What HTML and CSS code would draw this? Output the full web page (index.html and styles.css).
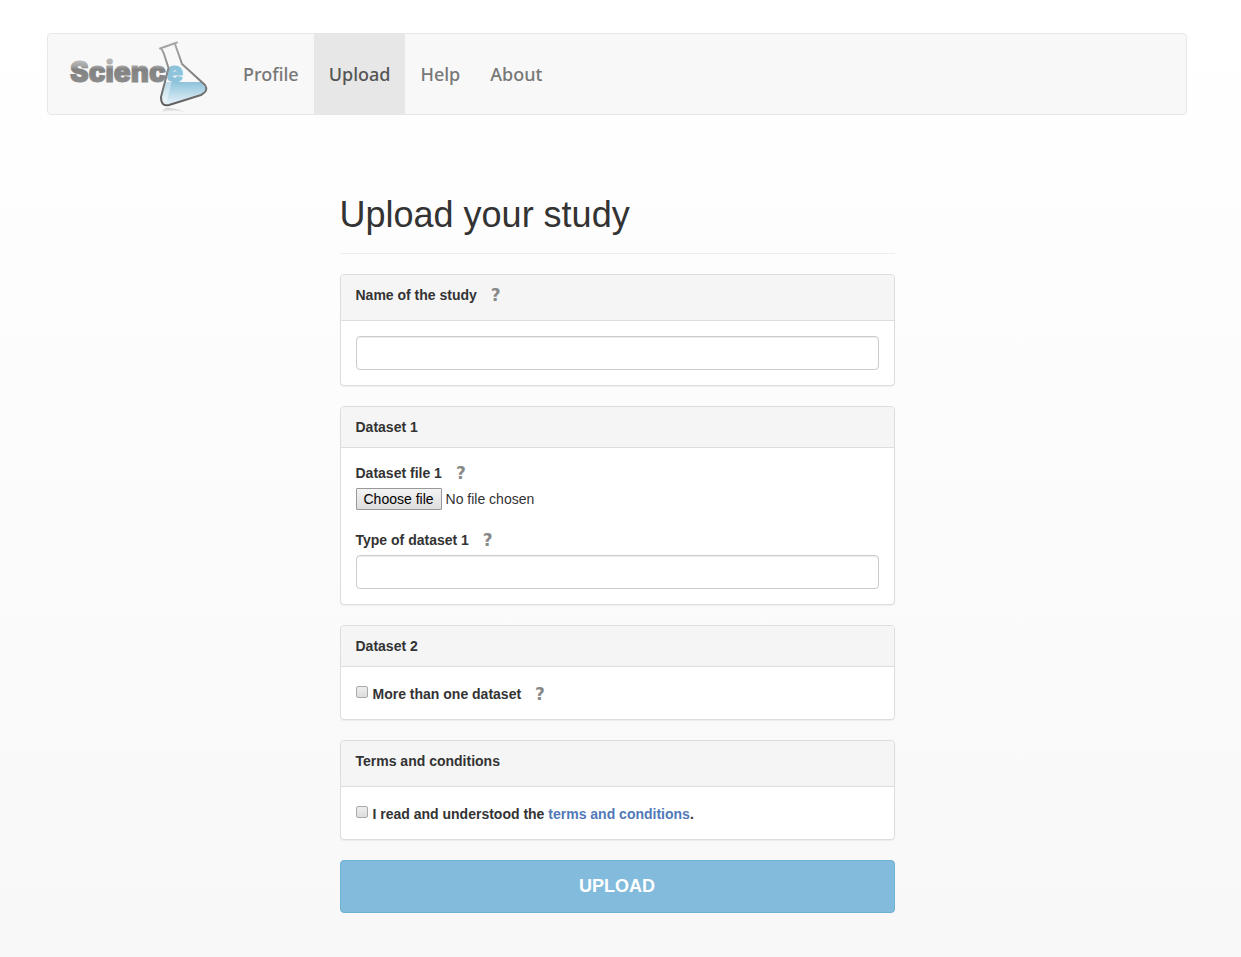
FILE: index.html
```html
<!DOCTYPE html>
<html lang="en">
<head>
<meta charset="utf-8">
<meta name="viewport" content="width=device-width, initial-scale=1">
<title>Upload your study</title>
<link rel="stylesheet" href="styles.css">
</head>
<body>
<div class="container">
  <nav class="navbar">
    <a class="brand" href="#">
      <svg class="logo" viewBox="0 0 150 80" role="img" aria-label="Science">
        <defs>
          <linearGradient id="letters" gradientUnits="userSpaceOnUse" x1="0" y1="28" x2="0" y2="49">
            <stop offset="0" stop-color="#b5b5b5"/>
            <stop offset=".2" stop-color="#a2a2a2"/>
            <stop offset=".35" stop-color="#828282"/>
            <stop offset="1" stop-color="#8b8b8b"/>
          </linearGradient>
          <linearGradient id="glass" x1="0" y1="0" x2="0" y2="1">
            <stop offset="0" stop-color="#a9a9a9"/>
            <stop offset="1" stop-color="#5e5e5e"/>
          </linearGradient>
          <linearGradient id="liquid" x1="0" y1="0" x2="0" y2="1">
            <stop offset="0" stop-color="#8dc3db"/>
            <stop offset="1" stop-color="#e6f2f8"/>
          </linearGradient>
          <linearGradient id="shade" x1="0" y1="0" x2="0" y2="1">
            <stop offset="0" stop-color="#d0d0d0"/>
            <stop offset="1" stop-color="#f8f8f8"/>
          </linearGradient>
        </defs>
        <text class="logo-text" x="7" y="48" fill="url(#letters)" stroke="url(#letters)">Scienc<tspan fill="#8ec3dc" stroke="#8ec3dc">e</tspan></text>
        <path d="M102 48H138L143 54Q142 58 138 60L106 70Q101 71 99 65Z" fill="url(#liquid)"/>
        <path d="M106 34L104 47H109L104 67L100 68L98 62Z" fill="#fff" opacity=".4"/>
        <path d="M97 14.500L114 8.500M98 14.500Q100 17 101 20L105.500 34L98 63Q98 73 106 71L138 61Q146 57 142 51L119 30L112 10" fill="none" stroke="url(#glass)" stroke-width="2" stroke-linejoin="round" stroke-linecap="round"/>
        <path d="M98 79Q101 73 107 74Q117 75 124 79Q114 76 107 77Q102 77 98 79Z" fill="url(#shade)"/>
      </svg>
    </a>
    <ul class="menu">
      <li><a href="#">Profile</a></li>
      <li><a class="active" href="#" aria-current="page">Upload</a></li>
      <li><a href="#">Help</a></li>
      <li><a href="#">About</a></li>
    </ul>
  </nav>
  <main class="content">
    <h1 class="title">Upload your study</h1>
    <form class="form">
      <section class="panel">
        <div class="panel-heading tall"><label for="name">Name of the study</label><button class="help" type="button">?</button></div>
        <div class="panel-body"><input class="field" id="name" type="text"></div>
      </section>
      <section class="panel">
        <div class="panel-heading">Dataset 1</div>
        <div class="panel-body stack">
          <div class="group">
            <div class="caption"><label for="file">Dataset file 1</label><button class="help" type="button">?</button></div>
            <label class="picker"><input class="picker-input" id="file" type="file"><span class="picker-button">Choose file</span><span>No file chosen</span></label>
          </div>
          <div class="group">
            <div class="caption"><label for="type">Type of dataset 1</label><button class="help" type="button">?</button></div>
            <input class="field" id="type" type="text">
          </div>
        </div>
      </section>
      <section class="panel">
        <div class="panel-heading">Dataset 2</div>
        <div class="panel-body check-row"><input class="check" id="more" type="checkbox"><label for="more">More than one dataset</label><button class="help" type="button">?</button></div>
      </section>
      <section class="panel">
        <div class="panel-heading tall">Terms and conditions</div>
        <div class="panel-body check-row"><input class="check" id="terms" type="checkbox"><label for="terms">I read and understood the <a class="link" href="#">terms and conditions</a>.</label></div>
      </section>
      <button class="submit" type="submit">UPLOAD</button>
    </form>
  </main>
</div>
</body>
</html>
```
FILE: styles.css
```css
* { box-sizing: border-box; }

html { min-height: 100%; background: linear-gradient(#fff, #f8f8f8); }

body {
  margin: 0;
  padding: 33px 54px 44px 47px;
  font: 14px/20px "Liberation Sans", Arial, sans-serif;
  color: #333;
}

.container { max-width: 1140px; margin: 0 auto; }

.navbar {
  display: flex;
  background: #f8f8f8;
  border: 1px solid #e7e7e7;
  border-radius: 4px;
}

.brand { display: block; padding: 0 15px; }
.logo { display: block; width: 150px; height: 80px; }
.logo-text { font: 900 28px Inter, sans-serif; stroke-width: 1px; }

.menu { display: flex; flex-wrap: wrap; margin: 0; padding: 0; list-style: none; }
.menu a {
  display: block;
  padding: 0 15px;
  font: 500 18px/80px "Noto Sans", sans-serif;
  color: #777;
  text-decoration: none;
}
.menu .active { background: #e7e7e7; color: #555; }

.content { max-width: 555px; margin: 80px auto 0; }

.title {
  margin: 0 0 20px;
  padding-bottom: 18px;
  border-bottom: 1px solid #eee;
  font-size: 36px;
  line-height: 40px;
  font-weight: 400;
}

.form { display: flex; flex-direction: column; gap: 20px; }

.panel {
  background: #fff;
  border: 1px solid #ddd;
  border-radius: 4px;
  box-shadow: 0 1px 1px rgba(0, 0, 0, .05);
}

.panel-heading {
  display: flex;
  padding: 10px 15px;
  background: #f5f5f5;
  border-bottom: 1px solid #ddd;
  border-radius: 3px 3px 0 0;
  font-weight: 700;
}
.tall { padding-bottom: 15px; }

.panel-body { padding: 15px; }
.stack { display: flex; flex-direction: column; gap: 20px; }

.caption { display: flex; margin-bottom: 5px; font-weight: 700; }

.help {
  height: 20px;
  margin: 0 0 0 14px;
  padding: 0;
  border: 0;
  background: none;
  font: 700 17px/20px "DejaVu Sans", sans-serif;
  color: #888;
  cursor: pointer;
}

.field {
  display: block;
  width: 100%;
  height: 34px;
  padding: 6px 12px;
  border: 1px solid #ccc;
  border-radius: 4px;
  background: #fff;
  box-shadow: inset 0 1px 1px rgba(0, 0, 0, .075);
  font: inherit;
}

.picker { display: flex; align-items: center; gap: 4px; position: relative; }
.picker-input { position: absolute; width: 1px; height: 1px; opacity: 0; }
.picker-button {
  padding: 0 7px;
  border: 1px solid #999;
  border-radius: 1px;
  background: linear-gradient(#f4f4f4, #ddd);
  color: #000;
}

.check-row { display: flex; padding-top: 17px; font-weight: 700; }
.check {
  appearance: none;
  width: 12px;
  height: 12px;
  margin: 2px 5px 0 0;
  border: 1px solid #aaa;
  border-radius: 2px;
  background: linear-gradient(#eee, #dcdcdc);
}
.check:checked { background: #82bbdb; }

.link { color: #5179b8; text-decoration: none; }

.submit {
  width: 100%;
  padding: 13px 16px 14px;
  border: 1px solid #6fb1d5;
  border-radius: 4px;
  background: #82bbdb;
  color: #fff;
  font: 700 18px/24px "Liberation Sans", Arial, sans-serif;
  cursor: pointer;
}
```
